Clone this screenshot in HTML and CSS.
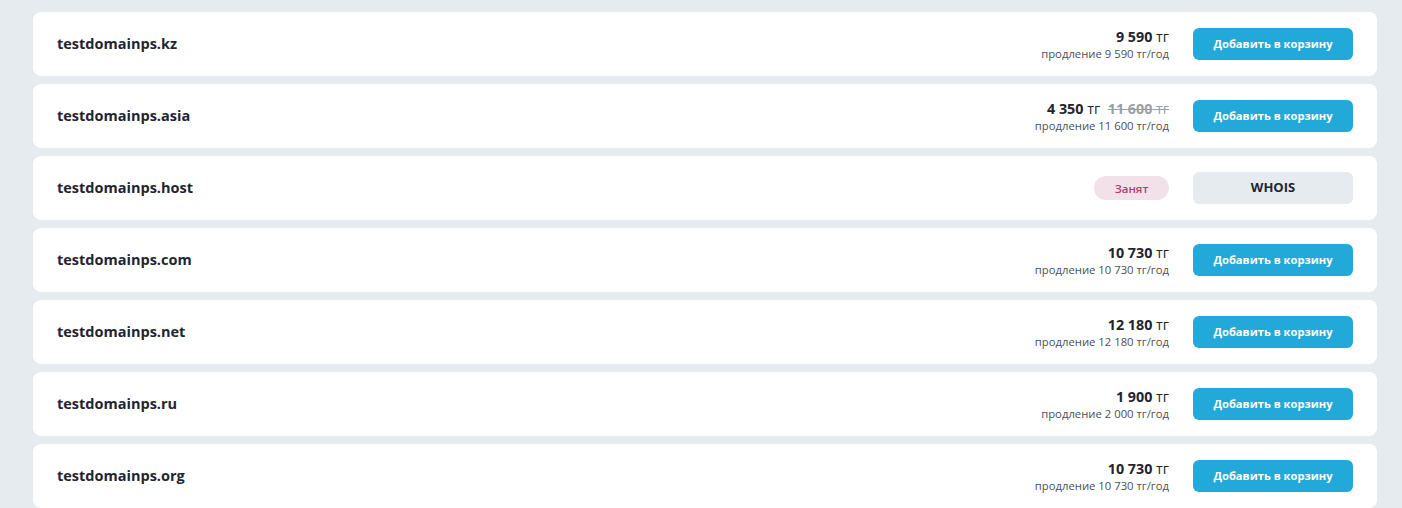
FILE: index.html
```
<!DOCTYPE html>
<html lang="ru">
<head>
<meta charset="utf-8">
<link rel="stylesheet" href="styles.css">
</head>
<body>
<div class="list">
  <div class="row">
    <div class="name">testdomainps.kz</div>
    <div class="right">
      <div class="price"><div class="main"><b>9 590</b> тг</div><div class="renew">продление 9 590 тг/год</div></div>
      <button class="btn add">Добавить в корзину</button>
    </div>
  </div>
  <div class="row">
    <div class="name">testdomainps.asia</div>
    <div class="right">
      <div class="price"><div class="main"><b>4 350</b> тг <s class="old"><b>11 600</b> тг</s></div><div class="renew">продление 11 600 тг/год</div></div>
      <button class="btn add">Добавить в корзину</button>
    </div>
  </div>
  <div class="row">
    <div class="name">testdomainps.host</div>
    <div class="right">
      <span class="badge">Занят</span>
      <button class="btn whois">WHOIS</button>
    </div>
  </div>
  <div class="row">
    <div class="name">testdomainps.com</div>
    <div class="right">
      <div class="price"><div class="main"><b>10 730</b> тг</div><div class="renew">продление 10 730 тг/год</div></div>
      <button class="btn add">Добавить в корзину</button>
    </div>
  </div>
  <div class="row">
    <div class="name">testdomainps.net</div>
    <div class="right">
      <div class="price"><div class="main"><b>12 180</b> тг</div><div class="renew">продление 12 180 тг/год</div></div>
      <button class="btn add">Добавить в корзину</button>
    </div>
  </div>
  <div class="row">
    <div class="name">testdomainps.ru</div>
    <div class="right">
      <div class="price"><div class="main"><b>1 900</b> тг</div><div class="renew">продление 2 000 тг/год</div></div>
      <button class="btn add">Добавить в корзину</button>
    </div>
  </div>
  <div class="row">
    <div class="name">testdomainps.org</div>
    <div class="right">
      <div class="price"><div class="main"><b>10 730</b> тг</div><div class="renew">продление 10 730 тг/год</div></div>
      <button class="btn add">Добавить в корзину</button>
    </div>
  </div>
</div>
</body>
</html>
```
FILE: styles.css
```
html, body {
  margin: 0;
  padding: 0;
  background: #e6ebf0;
  font-family: "Open Sans", "Noto Sans", sans-serif;
  color: #1f2530;
}
.list {
  display: flex;
  flex-direction: column;
  gap: 8px;
  padding: 12px 25px 0 33px;
}
.row {
  background: #fff;
  border-radius: 8px;
  height: 64px;
  box-sizing: border-box;
  padding: 0 24px;
  display: flex;
  align-items: center;
  justify-content: space-between;
}
.name {
  font-size: 14.5px;
  line-height: 18px;
  font-weight: 700;
  color: #1f2530;
  margin-top: -1px;
}
.right {
  display: flex;
  align-items: center;
  gap: 24px;
}
.price {
  text-align: right;
}
.main {
  font-size: 14.3px;
  line-height: 18px;
  color: #1f2530;
}
.main b {
  font-weight: 700;
}
.old {
  color: #9aa0a6;
  margin-left: 4px;
  text-decoration-thickness: 1px;
}
.renew {
  font-size: 11.3px;
  line-height: 15px;
  color: #4a4f57;
}
.btn {
  width: 160px;
  height: 32px;
  border: none;
  border-radius: 6px;
  padding: 0 0 2px;
  font-family: "Open Sans", sans-serif;
  font-weight: 700;
  cursor: pointer;
}
.add {
  background: #22a9d9;
  color: #fff;
  font-size: 11.2px;
}
.whois {
  background: #e6ebf0;
  color: #1f2530;
  font-size: 13px;
}
.badge {
  display: inline-flex;
  align-items: center;
  justify-content: center;
  width: 75px;
  height: 24px;
  border-radius: 12px;
  background: #f3e1ea;
  color: #b83a72;
  font-size: 11.5px;
  font-weight: 600;
}
```
